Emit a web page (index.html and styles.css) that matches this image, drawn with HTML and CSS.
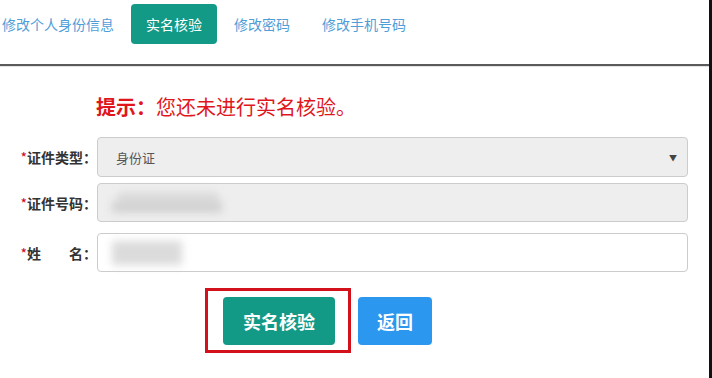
FILE: index.html
```html
<!DOCTYPE html>
<html lang="zh-CN">
  <head>
    <meta charset="UTF-8" />
    <title>实名核验</title>
    <link rel="stylesheet" href="styles.css">
  </head>
  <body>
    <main class="page">
      <nav class="tabs">
        <a class="tab" href="#">修改个人身份信息</a>
        <a class="tab active" href="#">实名核验</a>
        <a class="tab" href="#">修改密码</a>
        <a class="tab" href="#">修改手机号码</a>
      </nav>
      <section class="verify-box">
        <p class="hint"><b>提示：</b>您还未进行实名核验。</p>
        <form class="verify-form" autocomplete="off">
          <div class="form-row row-type">
            <label class="form-label" for="idType"><i>*</i>证件类型：</label>
            <div class="form-field field-select">
              <span class="field-text">身份证</span>
              <span class="caret">▼</span>
            </div>
          </div>
          <div class="form-row row-number">
            <label class="form-label" for="idNo"><i>*</i>证件号码：</label>
            <div class="form-field field-disabled">
              <span class="blur blur-a"></span>
              <span class="blur blur-b"></span>
            </div>
          </div>
          <div class="form-row row-name">
            <label class="form-label" for="name"><i>*</i>姓&emsp;&emsp;名：</label>
            <div class="form-field">
              <span class="blur blur-c"></span>
            </div>
          </div>
          <div class="form-actions">
            <div class="mark-box">
              <button type="submit" class="btn btn-verify">实名核验</button>
            </div>
            <button type="button" class="btn btn-back">返回</button>
          </div>
        </form>
      </section>
    </main>
  </body>
</html>
```

FILE: styles.css
```css
html,
body {
  margin: 0;
  padding: 0;
  background: #fff;
}
body {
  font-family: "Microsoft YaHei", "Noto Sans CJK SC", "Noto Sans", sans-serif;
  color: #333;
}
.page {
  width: 709px;
  height: 378px;
  border-right: 3px solid #111;
  overflow: hidden;
}
.tabs {
  display: flex;
  height: 60px;
  padding-top: 4px;
  margin-left: -13px;
  border-bottom: 2px solid #5b5b5b;
  box-shadow: 0 1px 0 #e2e2e2;
}
.tab {
  height: 40px;
  line-height: 40px;
  padding: 0 15px;
  margin-right: 2px;
  font-size: 14px;
  color: #4f9ed8;
  text-decoration: none;
  border-radius: 4px;
  white-space: nowrap;
}
.tab.active {
  background: #129a87;
  color: #fff;
}
.verify-box {
  padding-top: 26px;
}
.hint {
  margin: 0 0 0 96px;
  height: 30px;
  line-height: 30px;
  font-size: 20px;
  color: #e0161c;
}
.hint b {
  font-weight: 700;
}
.verify-form {
  margin-top: 15px;
}
.form-row {
  display: flex;
  align-items: center;
}
.row-number {
  margin-top: 6px;
}
.row-name {
  margin-top: 11px;
}
.form-label {
  flex: 0 0 97px;
  padding-right: 0;
  box-sizing: border-box;
  text-align: right;
  font-size: 14px;
  font-weight: 700;
  color: #333;
  white-space: nowrap;
}
.form-label i {
  font-style: normal;
  font-weight: 400;
  color: #d0021b;
}
.form-field {
  position: relative;
  width: 591px;
  height: 39px;
  box-sizing: border-box;
  border: 1px solid #ccc;
  border-radius: 4px;
  background: #fff;
  display: flex;
  align-items: center;
}
.field-select,
.field-disabled {
  background: #eee;
}
.field-select {
  height: 40px;
  padding: 0 10px 0 18px;
  justify-content: space-between;
}
.field-text {
  font-size: 13px;
  color: #555;
}
.caret {
  font-size: 8px;
  color: #444;
}
.blur {
  position: absolute;
  background: #cfcfcf;
  filter: blur(4px);
}
.blur-a {
  left: 20px;
  top: 8px;
  width: 100px;
  height: 14px;
  opacity: 0.6;
}
.blur-b {
  left: 14px;
  top: 18px;
  width: 110px;
  height: 10px;
}
.blur-c {
  left: 14px;
  top: 7px;
  width: 70px;
  height: 24px;
  opacity: 0.75;
}
.form-actions {
  display: flex;
  align-items: center;
  margin: 16px 0 0 205px;
}
.mark-box {
  width: 146px;
  height: 65px;
  box-sizing: border-box;
  border: 3px solid #d3111b;
  padding: 6px 0 0 15px;
  margin-right: 7px;
}
.btn {
  height: 48px;
  border: none;
  border-radius: 4px;
  font-family: inherit;
  font-size: 18px;
  font-weight: 700;
  color: #fff;
  cursor: pointer;
}
.btn-verify {
  width: 112px;
  background: #129a87;
}
.btn-back {
  width: 74px;
  background: #2b97ee;
}
```
